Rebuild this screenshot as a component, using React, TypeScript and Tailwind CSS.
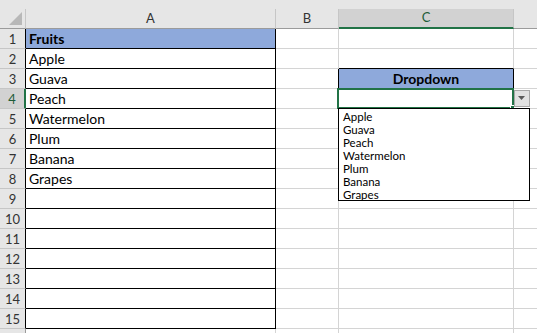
import type { ReactNode } from 'react';

const cn = (...classes: Array<string | false | null | undefined>) =>
  classes.filter(Boolean).join(' ');

const fruits = ['Apple', 'Guava', 'Peach', 'Watermelon', 'Plum', 'Banana', 'Grapes'];
const rows = Array.from({ length: 16 }, (_, i) => i + 1);

function ColHeader({ label, width, selected }: { label: string; width: string; selected?: boolean }) {
  return (
    <div
      className={cn(
        'flex h-full items-center justify-center border-r border-r-[#c6c6c6] text-[13px]',
        width,
        selected
          ? 'border-b-2 border-b-[#217346] bg-[#d2d2d2] text-[#1d5c38]'
          : 'border-b border-b-[#9b9b9b] bg-[#e6e6e6] text-[#333]'
      )}
    >
      {label}
    </div>
  );
}

function DropdownOverlay() {
  return (
    <>
      {/* active cell border + fill handle */}
      <div className="pointer-events-none absolute -left-[2px] -top-[1px] h-[21px] w-[177px] border-2 border-[#217346]" />
      <div className="absolute left-[171px] top-[16px] h-[5px] w-[5px] border border-white bg-[#217346]" />
      {/* arrow button */}
      <div className="absolute left-[175px] top-[1px] flex h-[17px] w-[16px] items-center justify-center border border-[#a6a6a6] bg-[#e1e1e1]">
        <svg width="8" height="5" viewBox="0 0 8 5">
          <path d="M0 0h7L3.5 4z" fill="#5a5a5a" />
        </svg>
      </div>
      {/* list */}
      <div className="absolute -left-[1px] top-[19px] z-10 h-[93px] w-[192px] border border-black bg-white pl-[4px] pt-[1px]">
        {fruits.map((f) => (
          <div key={f} className="h-[13px] text-[11.5px] leading-[13px] text-black">
            {f}
          </div>
        ))}
      </div>
    </>
  );
}

function Cell({ className, children }: { className?: string; children?: ReactNode }) {
  return <div className={cn('h-full border-b border-r', className)}>{children}</div>;
}

export default function App() {
  return (
    <div className="relative h-[333px] w-[537px] overflow-hidden bg-white font-['Lato',sans-serif] text-black">
      <div className="h-[9px] bg-[#e6e6e6]" />
      <div className="flex h-[20px] bg-[#e6e6e6]">
        <div className="relative h-full w-[26px] border-b border-r border-b-[#9b9b9b] border-r-[#c6c6c6]">
          <svg className="absolute left-[9px] top-[3px]" width="13" height="13" viewBox="0 0 13 13">
            <path d="M13 0V13H0z" fill="#b8b8b8" />
          </svg>
        </div>
        <ColHeader label="A" width="w-[250px]" />
        <ColHeader label="B" width="w-[63px]" />
        <ColHeader label="C" width="w-[175px]" selected />
        <div className="h-full flex-1 border-b border-b-[#9b9b9b]" />
      </div>

      {rows.map((r) => {
        const isHead = r === 1;
        const fruit = r >= 2 && r <= 8 ? fruits[r - 2] : '';
        const inA = r <= 15;
        return (
          <div key={r} className="flex h-[20px]">
            <div
              className={cn(
                'flex h-full w-[26px] items-center justify-center border-b border-b-[#c6c6c6] pt-[2px] text-[13px] leading-none',
                r === 4
                  ? 'border-r-2 border-r-[#217346] bg-[#d2d2d2] text-[#1d5c38]'
                  : cn('border-r bg-[#e6e6e6] text-[#333]', inA ? 'border-r-black' : 'border-r-[#9b9b9b]')
              )}
            >
              {r}
            </div>
            <Cell
              className={cn(
                'w-[250px] pl-[3px] text-[14px] leading-[19px]',
                inA ? 'border-black' : 'border-[#d4d4d4]',
                isHead && 'bg-[#8ea9db] font-bold'
              )}
            >
              {isHead ? 'Fruits' : fruit}
            </Cell>
            <Cell
              className={cn(
                'w-[63px] border-b-[#d4d4d4]',
                r === 3 ? 'border-r-black' : 'border-r-[#d4d4d4]'
              )}
            />
            <Cell
              className={cn(
                'relative w-[175px]',
                r === 2 || r === 3 ? 'border-b-black' : 'border-b-[#d4d4d4]',
                r === 3 ? 'border-r-black' : 'border-r-[#d4d4d4]',
                r === 3 && 'bg-[#8ea9db] text-center text-[14px] font-bold leading-[19px]'
              )}
            >
              {r === 3 && 'Dropdown'}
              {r === 4 && <DropdownOverlay />}
            </Cell>
            <div className="h-full flex-1 border-b border-[#d4d4d4]" />
          </div>
        );
      })}
    </div>
  );
}
